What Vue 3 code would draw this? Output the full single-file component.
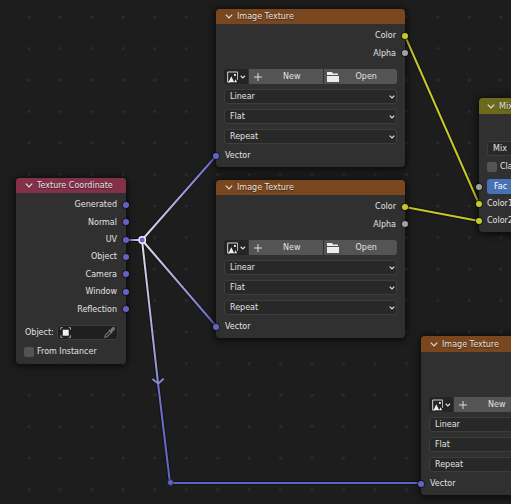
<script setup>
import { reactive } from 'vue'

const VIOLET = '#6363c7'
const YELLOW = '#c7c729'

const coordinate = reactive({
  outputs: ['Generated', 'Normal', 'UV', 'Object', 'Camera', 'Window', 'Reflection'],
  object: '',
  fromInstancer: false,
})

const textures = reactive([
  { id: 'a', place: 'texture-a', interpolation: 'Linear', projection: 'Flat', extension: 'Repeat' },
  { id: 'b', place: 'texture-b', interpolation: 'Linear', projection: 'Flat', extension: 'Repeat' },
  { id: 'c', place: 'texture-c tall', interpolation: 'Linear', projection: 'Flat', extension: 'Repeat' },
])

const menus = [
  { key: 'interpolation', label: 'Interpolation', options: ['Linear', 'Closest', 'Cubic', 'Smart'] },
  { key: 'projection', label: 'Projection', options: ['Flat', 'Box', 'Sphere', 'Tube'] },
  { key: 'extension', label: 'Extension', options: ['Repeat', 'Extend', 'Clip'] },
]

const mix = reactive({ blend: 'Mix', clamp: false, fac: 100 })

const links = [
  { id: 'l1', x1: 126, y1: 240, x2: 142, y2: 240, from: VIOLET, to: '#e8e8f4' },
  { id: 'l2', x1: 142, y1: 240, x2: 216, y2: 156, from: '#e0e0ea', to: VIOLET },
  { id: 'l3', x1: 142, y1: 240, x2: 216, y2: 326, from: '#e0e0ea', to: VIOLET },
  { id: 'l4', x1: 142, y1: 240, x2: 158, y2: 383, from: '#e0e0ea', to: '#8c8cd6' },
  { id: 'l5', x1: 158, y1: 383, x2: 170, y2: 483, from: '#7474cd', to: VIOLET },
  { id: 'l6', x1: 170, y1: 483, x2: 421, y2: 483, from: VIOLET, to: VIOLET },
  { id: 'l7', x1: 405, y1: 36, x2: 479, y2: 204, from: YELLOW, to: YELLOW },
  { id: 'l8', x1: 405, y1: 207, x2: 479, y2: 221, from: YELLOW, to: YELLOW },
]
</script>

<template>
  <main class="editor">
    <svg class="wires" aria-hidden="true">
      <defs>
        <pattern id="grid" x="13" y="1" width="31.45" height="31.5" patternUnits="userSpaceOnUse">
          <circle cx="16" cy="16" r="1.5" fill="#2c2c2c" />
        </pattern>
        <linearGradient
          v-for="l in links" :id="l.id" :key="l.id" gradientUnits="userSpaceOnUse"
          :x1="l.x1" :y1="l.y1" :x2="l.x2" :y2="l.y2"
        >
          <stop offset="0" :stop-color="l.from" />
          <stop offset="1" :stop-color="l.to" />
        </linearGradient>
      </defs>
      <rect width="100%" height="100%" fill="url(#grid)" />
      <path
        v-for="l in links" :key="l.id + 'o'" :d="`M${l.x1} ${l.y1}L${l.x2} ${l.y2}`"
        stroke="#121212" stroke-width="4"
      />
      <path
        v-for="l in links" :key="l.id" :d="`M${l.x1} ${l.y1}L${l.x2} ${l.y2 + 0.01}`"
        :stroke="`url(#${l.id})`" stroke-width="2"
      />
      <path d="M152.5 379l5.8 4.6 5.4-5" fill="none" stroke="#8c8cd6" stroke-width="1.8" />
      <circle cx="142.2" cy="240" r="3.2" fill="#6363c7" stroke="#f2f2f6" stroke-width="1.4" />
      <circle cx="170.5" cy="482.5" r="2.9" fill="#6363c7" stroke="#151515" stroke-width="0.6" />
    </svg>

    <section class="node coordinate">
      <header class="head red">
        <svg class="fold" viewBox="0 0 8 5"><path d="M.8.7 4 4 7.2.7" /></svg>
        <h2>Texture Coordinate</h2>
      </header>
      <ul class="outputs seven">
        <li v-for="o in coordinate.outputs" :key="o">{{ o }}<i class="socket right violet"></i></li>
      </ul>
      <div class="object-row">
        <label for="object">Object:</label>
        <div class="object-field">
          <svg class="cube" viewBox="0 0 12 12">
            <rect x="3" y="3" width="6.5" height="6.5" fill="#f0f0f0" />
            <path d="M.7 3V.7H3M9.3.7h2.2V3M.7 9v2.3H3M9.3 11.3h2.2V9" fill="none" stroke="#a8a8a8" />
          </svg>
          <input id="object" v-model="coordinate.object" type="text" />
          <svg class="dropper" viewBox="0 0 12 12">
            <path d="M.8 11.2l.7-2.4 4.7-4.7 1.8 1.8-4.7 4.7z" fill="none" stroke="#777" stroke-width="1.1" />
            <path d="M5.5 3.2l3.5 3.5M6.8 4.1L9 1.2q1.2-1.1 2.1-.3.8.9-.3 2.1L7.9 5.2z" fill="#777" stroke="#777" stroke-width="1.2" />
          </svg>
        </div>
      </div>
      <label class="check"><input v-model="coordinate.fromInstancer" type="checkbox" />From Instancer</label>
    </section>

    <section v-for="t in textures" :key="t.id" class="node texture" :class="t.place">
      <header class="head orange">
        <svg class="fold" viewBox="0 0 8 5"><path d="M.8.7 4 4 7.2.7" /></svg>
        <h2>Image Texture</h2>
      </header>
      <ul class="outputs">
        <li>Color<i class="socket right yellow"></i></li>
        <li>Alpha<i class="socket right grey"></i></li>
      </ul>
      <div class="fields">
        <div class="buttons">
          <button type="button" class="browse" aria-label="Browse image">
            <svg class="picture" viewBox="0 0 12 12">
              <path d="M3 11.4H.7V.7h10.6V9" fill="none" stroke="#dedede" />
              <path d="M1.5 11.5 4.6 5.3l3 6.2zM7.5 11.5l1.6-3 1.6 3z" fill="#efefef" />
              <rect x="7.4" y="2.8" width="2" height="2" fill="#efefef" />
            </svg>
            <svg class="caret" viewBox="0 0 6 4"><path d="M.7.7 3 3 5.3.7" /></svg>
          </button>
          <button type="button" class="action">
            <svg class="plus" viewBox="0 0 8 8"><path d="M4 0v8M0 4h8" stroke="#dcdcdc" /></svg>
            <span>New</span>
          </button>
          <button type="button" class="action">
            <svg class="folder" viewBox="0 0 12 10">
              <path d="M0 0h5l1 1.5h5V3H0zM0 4h12v5.5q0 .5-.5.5H.5Q0 10 0 9.5z" fill="#ececec" />
            </svg>
            <span>Open</span>
          </button>
        </div>
        <div v-for="m in menus" :key="m.key" class="menu">
          <select v-model="t[m.key]" :aria-label="m.label">
            <option v-for="o in m.options" :key="o">{{ o }}</option>
          </select>
          <svg class="caret" viewBox="0 0 6 4"><path d="M.7.7 3 3 5.3.7" /></svg>
        </div>
      </div>
      <div class="input-row">Vector<i class="socket left violet"></i></div>
    </section>

    <section class="node mix tall">
      <header class="head olive">
        <svg class="fold" viewBox="0 0 8 5"><path d="M.8.7 4 4 7.2.7" /></svg>
        <h2>Mix</h2>
      </header>
      <div class="mix-body">
        <div class="menu">
          <select v-model="mix.blend" aria-label="Blend mode">
            <option>Mix</option>
            <option>Add</option>
            <option>Multiply</option>
          </select>
        </div>
        <label class="check"><input v-model="mix.clamp" type="checkbox" />Clamp</label>
        <label class="slider">
          <input v-model="mix.fac" type="range" min="0" max="100" />
          <span>Fac</span>
          <i class="socket left grey"></i>
        </label>
      </div>
      <div class="input-row">Color1<i class="socket left yellow"></i></div>
      <div class="input-row">Color2<i class="socket left yellow"></i></div>
    </section>
  </main>
</template>

<style>
body {
  background: #1d1d1d;
}
</style>

<style scoped>
.editor {
  position: relative;
  min-height: 100vh;
  overflow: hidden;
  background: #1d1d1d;
  color: #e2e2e2;
  font: 8px/17px "DejaVu Sans", sans-serif;
}
.editor * {
  box-sizing: border-box;
}
.wires {
  position: absolute;
  inset: 0;
  width: 100%;
  height: 100%;
}
.node {
  position: absolute;
  border-radius: 4px;
  background: #303030;
  box-shadow: 0 1px 7px 2px rgba(0, 0, 0, 0.6);
  padding-bottom: 3px;
}
.coordinate {
  left: 16px;
  top: 178px;
  width: 110px;
  padding-bottom: 4px;
}
.texture {
  width: 189px;
}
.texture-a {
  left: 216px;
  top: 9px;
}
.texture-b {
  left: 216px;
  top: 180px;
}
.texture-c {
  left: 421px;
  top: 336px;
}
.mix {
  left: 479px;
  top: 98px;
  width: 147px;
}
.head {
  display: flex;
  align-items: center;
  gap: 4px;
  height: 15px;
  padding-left: 9px;
  border-radius: 4px 4px 0 0;
}
.tall .head {
  height: 16px;
}
.mix .head {
  padding-left: 8px;
}
.red {
  background: #83314a;
}
.orange {
  background: #79461d;
}
.olive {
  background: #6b6a1c;
}
h2 {
  margin: 0;
  font-size: 8px;
  font-weight: 400;
  line-height: 15px;
  text-shadow: 0 1px 1px rgba(0, 0, 0, 0.5);
  white-space: nowrap;
}
.fold {
  width: 8px;
  height: 5px;
}
.fold path,
.caret path {
  fill: none;
  stroke: #dedede;
  stroke-width: 1.2;
}
.caret {
  width: 6px;
  height: 4px;
}
.outputs {
  display: grid;
  grid-auto-rows: 1fr;
  align-items: center;
  height: 35px;
  margin: 3px 0 0;
  padding: 0;
  list-style: none;
  text-align: right;
}
.outputs.seven {
  height: 122px;
}
.outputs li,
.input-row {
  position: relative;
  padding: 0 9px;
}
.mix .input-row {
  padding: 0 8px;
}
.socket {
  position: absolute;
  top: 50%;
  width: 6px;
  height: 6px;
  margin-top: -3px;
  border-radius: 50%;
  box-shadow: 0 0 0 1px rgba(10, 10, 10, 0.5);
}
.right {
  right: -3px;
}
.left {
  left: -3px;
}
.violet {
  background: #6363c7;
}
.yellow {
  background: #c7c729;
}
.grey {
  background: #a1a1a1;
}
.fields {
  display: flex;
  flex-direction: column;
  gap: 5px;
  padding: 7px 8px 3px;
}
.buttons {
  display: flex;
  gap: 1px;
  height: 15px;
}
button {
  display: flex;
  align-items: center;
  margin: 0;
  padding: 0 3px;
  border: 0;
  color: inherit;
  font: inherit;
}
.browse {
  flex: none;
  gap: 2px;
  width: 24px;
  padding: 0 2px 0 3px;
  border-radius: 3px 0 0 3px;
  background: #242424;
}
.picture {
  width: 12px;
  height: 12px;
}
.action {
  flex: 1;
  background: #545454;
}
.action:last-child {
  border-radius: 0 3px 3px 0;
}
.action span {
  flex: 1;
  text-align: center;
}
.plus {
  width: 8px;
  height: 8px;
  margin: 0 2px;
}
.folder {
  width: 12px;
  height: 10px;
}
.menu {
  position: relative;
  display: flex;
}
select {
  appearance: none;
  width: 100%;
  height: 15px;
  margin: 0;
  padding: 0 5px;
  border: 1px solid #3d3d3d;
  border-radius: 3px;
  background: #282828;
  color: inherit;
  font: inherit;
  line-height: 13px;
}
.menu .caret {
  position: absolute;
  right: 2px;
  top: 6px;
}
.object-row {
  display: flex;
  align-items: center;
  gap: 3px;
  padding: 7px 8px 0 9px;
}
.object-row label {
  line-height: 15px;
}
.object-field {
  display: flex;
  flex: 1;
  align-items: center;
  min-width: 0;
  height: 15px;
  padding: 0 2px;
  border: 1px solid #3d3d3d;
  border-radius: 3px;
  background: #1f1f1f;
}
.object-field input {
  flex: 1;
  min-width: 0;
  padding: 0;
  border: 0;
  background: none;
  color: inherit;
  font: inherit;
  height: 13px;
}
.cube,
.dropper {
  flex: none;
  width: 11px;
  height: 11px;
}
.check {
  display: flex;
  align-items: center;
  gap: 3px;
  white-space: nowrap;
}
.coordinate .check {
  padding: 3px 8px 0;
}
.check input {
  appearance: none;
  width: 10px;
  height: 10px;
  margin: 0;
  border-radius: 2px;
  background: #545454;
}
.mix-body {
  padding: 27px 8px 0;
}
.mix-body .check {
  margin: 2px 0 4px;
}
.slider {
  position: relative;
  display: flex;
  height: 15px;
  margin-bottom: 1px;
}
.slider input {
  appearance: none;
  width: 100%;
  height: 15px;
  margin: 0;
  border-radius: 3px;
  background: #4772b3;
}
.slider input::-webkit-slider-thumb {
  appearance: none;
  width: 1px;
  height: 15px;
}
.slider span {
  position: absolute;
  left: 7px;
  line-height: 15px;
  color: #fff;
}
.slider .socket {
  left: -11px;
}
</style>
